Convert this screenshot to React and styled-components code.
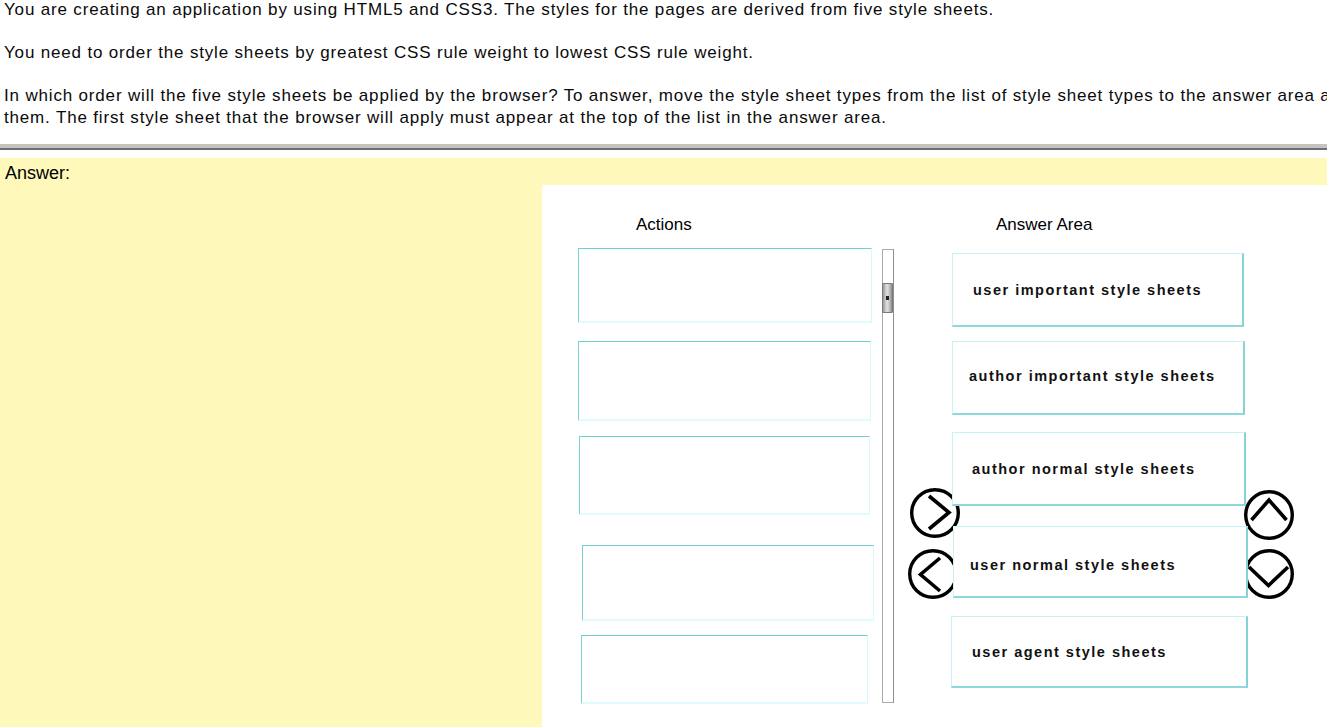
import React from 'react';
import styled, { createGlobalStyle } from 'styled-components';

const actionSlots = [
  { gap: 0, x: 0, w: 294, h: 75 },
  { gap: 18, x: 0, w: 293, h: 80 },
  { gap: 15, x: 1, w: 291, h: 79 },
  { gap: 30, x: 4, w: 292, h: 76 },
  { gap: 14, x: 3, w: 287, h: 69 },
];

// dy nudges the label up or down inside its box, as in the reference
const answers = [
  { text: 'user important style sheets', gap: 0, x: 1, w: 292, h: 74, pad: 20, dy: 0 },
  { text: 'author important style sheets', gap: 14, x: 1, w: 293, h: 74, pad: 16, dy: -2 },
  { text: 'author normal style sheets', gap: 17, x: 1, w: 294, h: 74, pad: 19, dy: 0 },
  { text: 'user normal style sheets', gap: 20, x: 2, w: 295, h: 72, pad: 16, dy: 3 },
  { text: 'user agent style sheets', gap: 18, x: 0, w: 297, h: 72, pad: 20, dy: 0 },
];

// chevron points inside a 52x52 circle button
const arrows = [
  { dir: 'right', left: 367, top: 302, points: '20,9 40,25.5 20,42' },
  { dir: 'left', left: 365, top: 363, points: '33,10 13.5,26.5 33,43' },
  { dir: 'up', left: 701, top: 304, points: '8.5,31 26,11 43.5,31' },
  { dir: 'down', left: 701, top: 363, points: '6,19 25.5,37.5 45,19' },
];

const App = () => {
  return (
    <>
      <GlobalStyle />
      <Question>
        <Para>
          You are creating an application by using HTML5 and CSS3. The styles for the pages are derived from five style sheets.
        </Para>
        <Para>You need to order the style sheets by greatest CSS rule weight to lowest CSS rule weight.</Para>
        <Para>
          In which order will the five style sheets be applied by the browser? To answer, move the style sheet types from the list of style sheet types to the answer area and arrange
          <br />
          them. The first style sheet that the browser will apply must appear at the top of the list in the answer area.
        </Para>
      </Question>
      <Separator />
      <AnswerSection>
        <AnswerLabel>Answer:</AnswerLabel>
        <Workspace>
          <div />
          <Panel>
            <ActionsColumn>
              <Heading $indent={58}>Actions</Heading>
              <ActionsRow>
                <SlotList>
                  {actionSlots.map((s, i) => (
                    <ActionSlot key={i} $gap={s.gap} $x={s.x} $w={s.w} $h={s.h} />
                  ))}
                </SlotList>
                <ScrollTrack>
                  <ScrollThumb>
                    <ThumbGrip />
                  </ScrollThumb>
                </ScrollTrack>
              </ActionsRow>
            </ActionsColumn>

            <AnswerColumn>
              <Heading $indent={45}>Answer Area</Heading>
              <AnswerList>
                {answers.map((a) => (
                  <AnswerItem key={a.text} $gap={a.gap} $x={a.x} $w={a.w} $h={a.h} $pad={a.pad} $dy={a.dy}>
                    {a.text}
                  </AnswerItem>
                ))}
              </AnswerList>
            </AnswerColumn>

            {arrows.map((a) => (
              <ArrowButton key={a.dir} $left={a.left} $top={a.top} aria-label={a.dir}>
                <svg width="52" height="52" viewBox="0 0 52 52">
                  <circle cx="26" cy="26" r="23.3" fill="none" stroke="#000" strokeWidth="3.4" />
                  <polyline points={a.points} fill="none" stroke="#000" strokeWidth="3.6" strokeLinejoin="miter" />
                </svg>
              </ArrowButton>
            ))}
          </Panel>
        </Workspace>
      </AnswerSection>
    </>
  );
};

export default App;

const GlobalStyle = createGlobalStyle`
  html, body { margin: 0; padding: 0; overflow: hidden; background: #fff; }
  body { font-family: "Liberation Sans", Arial, sans-serif; color: #000; width: 1327px; height: 727px; }
`;

const Question = styled.div` margin-top: -1px; padding: 0 0 0 4px; overflow: hidden; white-space: nowrap; `;
const Para = styled.p` margin: 0 0 21px; font-size: 17px; line-height: 22px; letter-spacing: 0.83px; color: #0a0a0a; &:last-child { margin-bottom: 0; } `;
const Separator = styled.div` margin-top: 15px; height: 6px; background: linear-gradient(#c3c3bf 0 4px, #6f6f6f 4px 6px); `;
const AnswerSection = styled.section` margin-top: 8px; background: #fef8bb; `;
const AnswerLabel = styled.div` padding: 4px 0 0 5px; font-size: 18px; line-height: 22px; height: 23px; `;
const Workspace = styled.div` display: grid; grid-template-columns: 542px 1fr; `;
const Panel = styled.div` position: relative; background: #fff; display: flex; gap: 57px; padding: 30px 0 0 36px; min-height: 560px; `;
const ActionsColumn = styled.div` display: flex; flex-direction: column; width: 316px; `;
const AnswerColumn = styled.div` display: flex; flex-direction: column; width: 300px; `;
const Heading = styled.div` font-size: 17px; line-height: 20px; padding-left: ${(p) => p.$indent}px; `;
const ActionsRow = styled.div` display: flex; margin-top: 13px; `;
const SlotList = styled.div` display: flex; flex-direction: column; width: 304px; `;
const ActionSlot = styled.div`
  box-sizing: border-box;
  margin: ${(p) => p.$gap}px 0 0 ${(p) => p.$x}px;
  width: ${(p) => p.$w}px; height: ${(p) => p.$h}px;
  border-top: 1px solid #6fd0d3; border-left: 1px solid #78d2d5;
  border-right: 1px solid #d6fafb; border-bottom: 2px solid #e0fcfd;
  background: #fff;
`;
const ScrollTrack = styled.div`
  position: relative; box-sizing: border-box; margin-top: 1px; width: 12px; height: 454px;
  border: 1px solid #a9a9a9; border-right-color: #8f8f8f; background: #fff;
`;
const ScrollThumb = styled.div`
  position: absolute; left: -1px; top: 33px; width: 11px; height: 30px; box-sizing: border-box;
  border: 1px solid #7a7a7a; border-radius: 1px;
  background: linear-gradient(90deg, #9a9a9a, #e2e2e2 45%, #c4c4c4 70%, #8a8a8a);
`;
const ThumbGrip = styled.div` position: absolute; left: 3px; top: 12px; width: 3px; height: 4px; background: #222; `;
const AnswerList = styled.div` display: flex; flex-direction: column; margin-top: 18px; `;
const AnswerItem = styled.div`
  position: relative; z-index: 1; box-sizing: border-box;
  margin: ${(p) => p.$gap}px 0 0 ${(p) => p.$x}px;
  width: ${(p) => p.$w}px; height: ${(p) => p.$h}px;
  display: flex; align-items: center; padding-left: ${(p) => p.$pad}px;
  padding-top: ${(p) => Math.max(0, p.$dy * 2)}px; padding-bottom: ${(p) => Math.max(0, -p.$dy * 2)}px;
  border: 1px solid #c6f3f5; border-right: 2px solid #86d3d6; border-bottom: 2px solid #8fd7da;
  background: #fff;
  font-size: 14.5px; font-weight: bold; letter-spacing: 1.5px; color: #111;
`;
const ArrowButton = styled.div` position: absolute; z-index: 0; left: ${(p) => p.$left}px; top: ${(p) => p.$top}px; width: 52px; height: 52px; `;
